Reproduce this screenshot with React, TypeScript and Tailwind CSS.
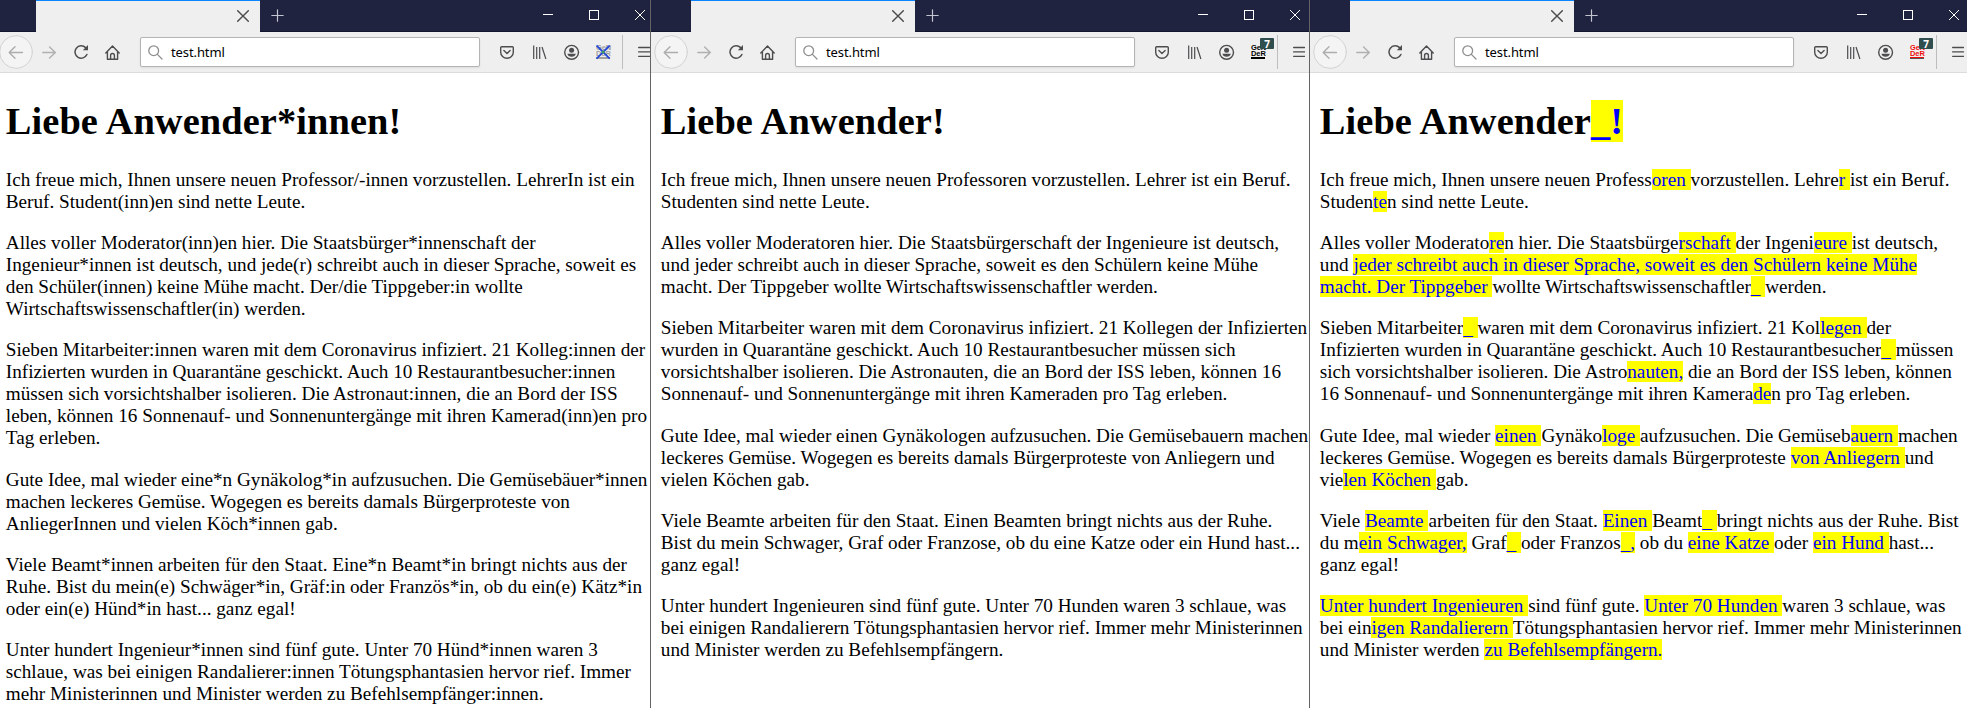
import React from "react";

type Variant = "off" | "plain" | "debug";

function M({ children }: { children: React.ReactNode }) {
  return <span className="bg-[#ffff00] text-[#0000ff]">{children}</span>;
}

/* Placeholder for a removed ending: an underscore that sits at the bottom of its highlight. */
function Gap({ after = " " }: { after?: string }) {
  return (
    <M>
      <span className="relative top-px">_</span>
      {after}
    </M>
  );
}

function TabStrip() {
  return (
    <div className="flex h-8 w-[655px] shrink-0 border-b border-[#14162e] bg-[#202340]">
      <div className="ml-9 flex h-8 w-56 items-start justify-end border-t border-[#0a84ff] bg-[#efefef] pr-[11px] pt-[9px]">
        <svg width="12" height="12" viewBox="0 0 12 12" stroke="#4a4a4c" strokeWidth="1.4" strokeLinecap="round">
          <path d="M.7.7l10.6 10.6M11.3.7L.7 11.3" />
        </svg>
      </div>
      <svg className="ml-[11px] mt-[9px]" width="13" height="13" viewBox="0 0 13 13" stroke="#c3c4d0" strokeWidth="1.2" strokeLinecap="round">
        <path d="M6.5.8v11.4M.8 6.5h11.4" />
      </svg>
      <svg className="ml-auto mr-[10px] mt-[10px]" width="102" height="10" viewBox="0 0 102 10" fill="none" stroke="#fff" shapeRendering="crispEdges">
        <path d="M0 4.5h10" />
        <path d="M46.5.5h9v9h-9z" />
        <path d="M92 0l10 10M102 0L92 10" shapeRendering="auto" />
      </svg>
    </div>
  );
}

function GenderIcon({ variant }: { variant: Variant }) {
  const tone =
    variant === "off" ? "text-[#a0a0a0]" : variant === "plain" ? "text-black" : "text-[#f00c0c]";
  return (
    <div className={`relative h-[15px] w-[15px] font-['Liberation_Sans',sans-serif] text-[7.5px] font-bold leading-[6px] tracking-[-0.1px] ${tone}`}>
      <div className="h-[6px]">GeN</div>
      <div className="h-[6px]">DeR</div>
      <div className="h-px w-[14px] bg-current" />
      <div className={variant === "debug" ? "h-px w-[14px] bg-[#555]" : "h-px w-[14px] bg-current"} />
      {variant === "off" ? (
        <svg className="absolute left-0 top-0" width="15" height="15" viewBox="0 0 15 15">
          <path d="M.5.5l13.200 13.200M13.700.5L.5 13.700" stroke="#2446d8" strokeWidth="1.800" />
          <circle cx="7.100" cy="7.100" r="1.500" fill="#3b9a5c" />
        </svg>
      ) : (
        <div className="absolute -top-[7px] left-[9px] flex h-[11px] w-[14px] items-center justify-center rounded-[1px] bg-[#2f4f4f] font-['Open_Sans',sans-serif] text-[10px] font-bold leading-none tracking-normal text-white">
          7
        </div>
      )}
    </div>
  );
}

function Toolbar({ variant }: { variant: Variant }) {
  return (
    <div className="flex h-[41px] w-[655px] shrink-0 items-start border-b border-[#dcdcdc] bg-[#efefef]">
      <svg className="-ml-px mt-[3px] shrink-0" width="34" height="34" viewBox="0 0 34 34" fill="none" strokeLinecap="round" strokeLinejoin="round">
        <circle cx="17" cy="17" r="16.300" fill="#f4f4f4" stroke="#d2d2d2" />
        <path d="M23.500 17.500h-13M16 11.800l-5.800 5.700 5.800 5.700" stroke="#adadad" strokeWidth="1.400" />
      </svg>
      <svg className="ml-[9px] mt-[14px] shrink-0" width="14" height="13" viewBox="0 0 14 13" fill="none" stroke="#b0b0b0" strokeWidth="1.400" strokeLinecap="round" strokeLinejoin="round">
        <path d="M.8 6.500h12.400M7.600.9l5.700 5.600-5.700 5.600" />
      </svg>
      <svg className="ml-[18px] mt-3 shrink-0" width="15" height="16" viewBox="0 0 15 16" fill="none" stroke="#4d4d4f" strokeWidth="1.500">
        <path d="M12.900 10.500A6.200 6.200 0 1 1 11.600 3.600" strokeLinecap="round" />
        <path d="M14 1v5.200H8.800z" fill="#4d4d4f" stroke="none" />
      </svg>
      <svg className="ml-4 mt-[13px] shrink-0" width="15" height="16" viewBox="0 0 15 16" fill="none" stroke="#4d4d4f" strokeWidth="1.400" strokeLinecap="round" strokeLinejoin="round">
        <path d="M.8 8L7.500 1l6.700 7M2.400 7v7.300h10.200V7" />
        <path d="M5.600 14v-3.600a1.900 1.900 0 0 1 3.800 0V14" />
      </svg>
      <div className="ml-5 mt-[5px] flex h-[30px] w-[340px] shrink-0 items-center rounded-[2px] border border-[#b4b4b4] bg-white pl-[7px] shadow-[0_1px_2px_rgba(0,0,0,0.08)]">
        <svg width="15" height="15" viewBox="0 0 15 15" fill="none" stroke="#8f8f90" strokeWidth="1.300" strokeLinecap="round">
          <circle cx="5.700" cy="5.700" r="4.900" />
          <path d="M9.400 9.400l4.600 4.600" />
        </svg>
        <span className="ml-2 mt-px font-['Noto_Sans',sans-serif] text-[13px] leading-none tracking-[-0.1px] text-black">test.html</span>
      </div>
      <svg className="ml-5 mt-[14px] shrink-0" width="14" height="13" viewBox="0 0 14 13" fill="none" stroke="#4d4d4f" strokeWidth="1.400" strokeLinecap="round" strokeLinejoin="round">
        <path d="M1.700.7h10.600a1 1 0 0 1 1 1v4.500a6.300 6.100 0 0 1-12.600 0V1.700a1 1 0 0 1 1-1z" />
        <path d="M3.900 4.600L7 7.500l3.100-2.900" />
      </svg>
      <svg className="ml-[19px] mt-[13px] shrink-0" width="14" height="15" viewBox="0 0 14 15" fill="none" stroke="#4d4d4f" strokeWidth="1.200">
        <path d="M.7.500v13.500M3.700 2v12M6.700 2v12" />
        <path d="M9 2l3.900 12" />
      </svg>
      <svg className="ml-[17px] mt-[12px] shrink-0" width="16" height="16" viewBox="0 0 16 16" fill="none">
        <circle cx="7.600" cy="8.300" r="6.900" stroke="#4d4d4f" strokeWidth="1.400" />
        <circle cx="7.600" cy="6.200" r="2.500" fill="#4d4d4f" />
        <path d="M3.400 9.800h8.400c-.3 1.900-2 2.900-4.200 2.900s-3.900-1-4.200-2.900z" fill="#4d4d4f" />
      </svg>
      <div className="ml-4 mt-[13px] shrink-0">
        <GenderIcon variant={variant} />
      </div>
      <div className="ml-[11px] mt-[3px] h-[34px] w-px shrink-0 bg-[#bdbdbd]" />
      <svg className="ml-[15px] mt-[14px] shrink-0" width="12" height="12" viewBox="0 0 12 12" stroke="#4d4d4f" strokeWidth="1.300" strokeLinecap="round">
        <path d="M.6 1.500h11M.6 5.900h11M.6 10.300h11" />
      </svg>
    </div>
  );
}

function Lines({ lines }: { lines: React.ReactNode[] }) {
  return (
    <p className="mb-[19.2px] whitespace-pre text-[19.2px] leading-[22px]">
      {lines.map((line, i) => (
        <span key={i} className="block">
          {line}
        </span>
      ))}
    </p>
  );
}

function Browser({
  variant,
  title,
  paragraphs,
  frame,
}: {
  variant: Variant;
  title: React.ReactNode;
  paragraphs: React.ReactNode[][];
  frame: string;
}) {
  return (
    <section className={`flex h-[708px] shrink-0 flex-col overflow-hidden bg-white ${frame}`}>
      <TabStrip />
      <Toolbar variant={variant} />
      <div className="pl-[5.8px] font-['Liberation_Serif',serif] text-black">
        <h1 className="mb-[26.3px] mt-[25.7px] whitespace-pre text-[38.4px] font-bold leading-[44px] tracking-[0.1px]">{title}</h1>
        {paragraphs.map((lines, i) => (
          <Lines key={i} lines={lines} />
        ))}
      </div>
    </section>
  );
}

const original: React.ReactNode[][] = [
  ["Ich freue mich, Ihnen unsere neuen Professor/-innen vorzustellen. LehrerIn ist ein", "Beruf. Student(inn)en sind nette Leute."],
  [
    "Alles voller Moderator(inn)en hier. Die Staatsbürger*innenschaft der",
    "Ingenieur*innen ist deutsch, und jede(r) schreibt auch in dieser Sprache, soweit es",
    "den Schüler(innen) keine Mühe macht. Der/die Tippgeber:in wollte",
    "Wirtschaftswissenschaftler(in) werden.",
  ],
  [
    "Sieben Mitarbeiter:innen waren mit dem Coronavirus infiziert. 21 Kolleg:innen der",
    "Infizierten wurden in Quarantäne geschickt. Auch 10 Restaurantbesucher:innen",
    "müssen sich vorsichtshalber isolieren. Die Astronaut:innen, die an Bord der ISS",
    "leben, können 16 Sonnenauf- und Sonnenuntergänge mit ihren Kamerad(inn)en pro",
    "Tag erleben.",
  ],
  [
    "Gute Idee, mal wieder eine*n Gynäkolog*in aufzusuchen. Die Gemüsebäuer*innen",
    "machen leckeres Gemüse. Wogegen es bereits damals Bürgerproteste von",
    "AnliegerInnen und vielen Köch*innen gab.",
  ],
  [
    "Viele Beamt*innen arbeiten für den Staat. Eine*n Beamt*in bringt nichts aus der",
    "Ruhe. Bist du mein(e) Schwäger*in, Gräf:in oder Französ*in, ob du ein(e) Kätz*in",
    "oder ein(e) Hünd*in hast... ganz egal!",
  ],
  [
    "Unter hundert Ingenieur*innen sind fünf gute. Unter 70 Hünd*innen waren 3",
    "schlaue, was bei einigen Randalierer:innen Tötungsphantasien hervor rief. Immer",
    "mehr Ministerinnen und Minister werden zu Befehlsempfänger:innen.",
  ],
];

const filtered: React.ReactNode[][] = [
  ["Ich freue mich, Ihnen unsere neuen Professoren vorzustellen. Lehrer ist ein Beruf.", "Studenten sind nette Leute."],
  [
    "Alles voller Moderatoren hier. Die Staatsbürgerschaft der Ingenieure ist deutsch,",
    "und jeder schreibt auch in dieser Sprache, soweit es den Schülern keine Mühe",
    "macht. Der Tippgeber wollte Wirtschaftswissenschaftler werden.",
  ],
  [
    "Sieben Mitarbeiter waren mit dem Coronavirus infiziert. 21 Kollegen der Infizierten",
    "wurden in Quarantäne geschickt. Auch 10 Restaurantbesucher müssen sich",
    "vorsichtshalber isolieren. Die Astronauten, die an Bord der ISS leben, können 16",
    "Sonnenauf- und Sonnenuntergänge mit ihren Kameraden pro Tag erleben.",
  ],
  [
    "Gute Idee, mal wieder einen Gynäkologen aufzusuchen. Die Gemüsebauern machen",
    "leckeres Gemüse. Wogegen es bereits damals Bürgerproteste von Anliegern und",
    "vielen Köchen gab.",
  ],
  [
    "Viele Beamte arbeiten für den Staat. Einen Beamten bringt nichts aus der Ruhe.",
    "Bist du mein Schwager, Graf oder Franzose, ob du eine Katze oder ein Hund hast...",
    "ganz egal!",
  ],
  [
    "Unter hundert Ingenieuren sind fünf gute. Unter 70 Hunden waren 3 schlaue, was",
    "bei einigen Randalierern Tötungsphantasien hervor rief. Immer mehr Ministerinnen",
    "und Minister werden zu Befehlsempfängern.",
  ],
];

const marked: React.ReactNode[][] = [
  [
    <>Ich freue mich, Ihnen unsere neuen Profess<M>{"oren "}</M>vorzustellen. Lehre<M>{"r "}</M>ist ein Beruf.</>,
    <>Studen<M>te</M>n sind nette Leute.</>,
  ],
  [
    <>Alles voller Moderato<M>re</M>n hier. Die Staatsbürge<M>{"rschaft "}</M>der Ingeni<M>{"eure "}</M>ist deutsch,</>,
    <>und <M>jeder schreibt auch in dieser Sprache, soweit es den Schülern keine Mühe</M></>,
    <><M>{"macht. Der Tippgeber "}</M>wollte Wirtschaftswissenschaftler<Gap />werden.</>,
  ],
  [
    <>Sieben Mitarbeiter<Gap />waren mit dem Coronavirus infiziert. 21 Kol<M>{"legen "}</M>der</>,
    <>Infizierten wurden in Quarantäne geschickt. Auch 10 Restaurantbesucher<Gap />müssen</>,
    <>sich vorsichtshalber isolieren. Die Astro<M>nauten,</M> die an Bord der ISS leben, können</>,
    <>16 Sonnenauf- und Sonnenuntergänge mit ihren Kamera<M>de</M>n pro Tag erleben.</>,
  ],
  [
    <>Gute Idee, mal wieder <M>{"einen "}</M>Gynäko<M>{"loge "}</M>aufzusuchen. Die Gemüseb<M>{"auern "}</M>machen</>,
    <>leckeres Gemüse. Wogegen es bereits damals Bürgerproteste <M>{"von Anliegern "}</M>und</>,
    <>vie<M>{"len Köchen "}</M>gab.</>,
  ],
  [
    <>Viele <M>{"Beamte "}</M>arbeiten für den Staat. <M>{"Einen "}</M>Beamt<Gap />bringt nichts aus der Ruhe. Bist</>,
    <>du m<M>ein Schwager,</M> Graf<Gap />oder Franzos<Gap after="," /> ob du <M>{"eine Katze "}</M>oder <M>{"ein Hund "}</M>hast...</>,
    "ganz egal!",
  ],
  [
    <><M>{"Unter hundert Ingenieuren "}</M>sind fünf gute. <M>{"Unter 70 Hunden "}</M>waren 3 schlaue, was</>,
    <>bei ein<M>{"igen Randalierern "}</M>Tötungsphantasien hervor rief. Immer mehr Ministerinnen</>,
    <>und Minister werden <M>zu Befehlsempfängern.</M></>,
  ],
];

/* Extends the tab bar and toolbar colours into the left padding of a framed window. */
const framed =
  "border-l border-[#636366] pl-1 bg-[linear-gradient(#202340_0,#202340_31px,#14162e_31px,#14162e_32px,#efefef_32px,#efefef_72px,#dcdcdc_72px,#dcdcdc_73px,#ffffff_73px)]";

export default function App() {
  return (
    <main className="flex h-[708px] w-[1967px] overflow-hidden bg-white">
      <Browser variant="off" title="Liebe Anwender*innen!" paragraphs={original} frame="w-[650px]" />
      <Browser variant="plain" title="Liebe Anwender!" paragraphs={filtered} frame={`w-[659px] ${framed}`} />
      <Browser variant="debug" title={<>Liebe Anwender<Gap after="!" /></>} paragraphs={marked} frame={`w-[658px] ${framed}`} />
    </main>
  );
}
